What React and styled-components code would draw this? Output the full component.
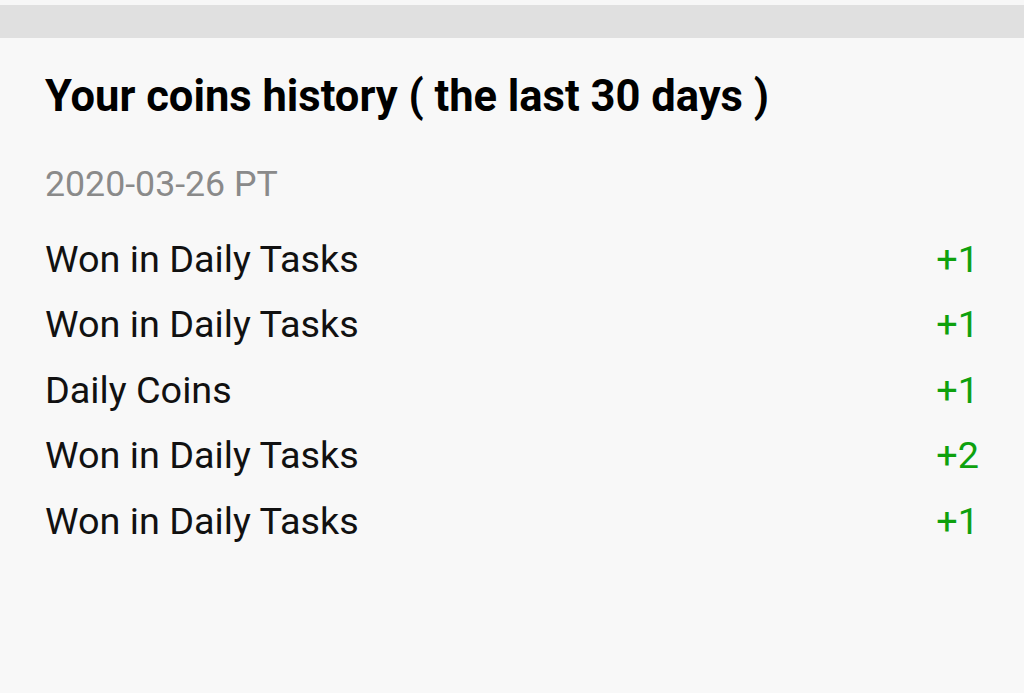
import React from "react";
import styled, { createGlobalStyle } from "styled-components";

const history = [
  { label: "Won in Daily Tasks", amount: 1 },
  { label: "Won in Daily Tasks", amount: 1 },
  { label: "Daily Coins", amount: 1 },
  { label: "Won in Daily Tasks", amount: 2 },
  { label: "Won in Daily Tasks", amount: 1 },
];

function App() {
  return (
    <>
      <GlobalStyle />
      <Page>
        <TopStrip />
        <TopBar />
        <Content>
          <Title>Your coins history ( the last 30 days )</Title>
          <DateLabel>2020-03-26 PT</DateLabel>
          <List>
            {history.map((item, i) => (
              <Row key={i}>
                <Label>{item.label}</Label>
                <Amount>+{item.amount}</Amount>
              </Row>
            ))}
          </List>
        </Content>
      </Page>
    </>
  );
}

const GlobalStyle = createGlobalStyle`
  html, body {
    margin: 0;
    padding: 0;
    background: #f8f8f8;
    font-family: Roboto, "Liberation Sans", sans-serif;
  }
`;

const Page = styled.div`
  width: 1024px;
  height: 693px;
  background: #f8f8f8;
  overflow: hidden;
`;

const TopStrip = styled.div`
  height: 5px;
  background: #f7f7f7;
`;

const TopBar = styled.div`
  height: 33px;
  background: #e0e0e0;
`;

const Content = styled.div`
  padding: 33px 45px 0 45px;
`;

const Title = styled.h1`
  margin: 0;
  font-size: 43.5px;
  line-height: 52px;
  font-weight: 700;
  color: #000;
`;

const DateLabel = styled.div`
  margin-top: 39px;
  font-size: 35.7px;
  line-height: 44px;
  color: #8a8a8a;
`;

const List = styled.div`
  margin-top: 20px;
  display: flex;
  flex-direction: column;
`;

const Row = styled.div`
  display: flex;
  justify-content: space-between;
  align-items: center;
  height: 65.5px;
`;

const Label = styled.span`
  font-size: 37.8px;
  color: #111;
`;

const Amount = styled.span`
  font-size: 37.8px;
  color: #0ea10e;
`;

export default App;
